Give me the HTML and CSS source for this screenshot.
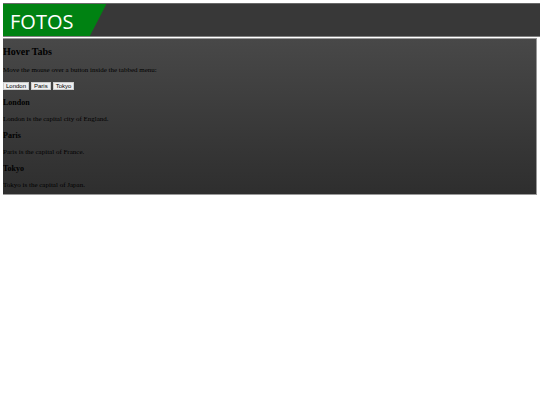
FILE: index.html
```html
<!DOCTYPE html>
<html lang="en">
<head>
    <meta charset="UTF-8">
    <meta name="viewport" content="width=device-width, initial-scale=1.0">
    <title>Fotos</title>
    <link rel="stylesheet" href="styles.css">
</head>
<body>

    <header class="topbar">
        <div class="logo">FOTOS</div>
    </header>

    <main class="content">
        <h2>Hover Tabs</h2>
        <p>Move the mouse over a button inside the tabbed menu:</p>

        <div class="tab">
            <button class="tablinks" type="button">London</button>
            <button class="tablinks" type="button">Paris</button>
            <button class="tablinks" type="button">Tokyo</button>
        </div>

        <h3>London</h3>
        <p>London is the capital city of England.</p>

        <h3>Paris</h3>
        <p>Paris is the capital of France.</p>

        <h3>Tokyo</h3>
        <p>Tokyo is the capital of Japan.</p>
    </main>

</body>
</html>
```
FILE: styles.css
```css
/* no right margin: the bar runs to the edge of the window */
body {
    margin: 3px 0 3px 3px;
    font-family: "Liberation Serif", "Times New Roman", serif;
    font-size: 7px;
    line-height: 8px;
    color: #000;
    background-color: #fff;
}

.topbar {
    display: flex;
    margin-bottom: 1px;
    background-color: #383838;
    border-top: 1px solid #686868;
    border-bottom: 1px solid #808080;
}

.logo {
    padding: 4px 33px 0 7px;
    font-family: "Open Sans", "Noto Sans", sans-serif;
    font-size: 20px;
    line-height: 28px;
    color: #fff;
    background-color: #008212;
    clip-path: polygon(0 0, 100% 0, 84% 100%, 0 100%);
}

.content {
    display: flex;
    flex-direction: column;
    gap: 8px;
    margin-right: 3px;
    padding: 7px 0 5px;
    background-image: linear-gradient(#484848, #2e2e2e);
    border: 1px solid #999;
    border-left: none;
}

h2, h3, p {
    margin: 0;
}

h2 {
    font-size: 10px;
    line-height: 12px;
}

h3 {
    font-size: 8px;
    line-height: 9px;
}

.tab {
    display: flex;
    gap: 2px;
}

.tablinks {
    padding: 0 2px;
    font-family: "Liberation Sans", Arial, sans-serif;
    font-size: 6px;
    line-height: 6px;
    color: #000;
    background-color: #efefef;
    border: 1px solid #ccc;
    cursor: pointer;
}
```
